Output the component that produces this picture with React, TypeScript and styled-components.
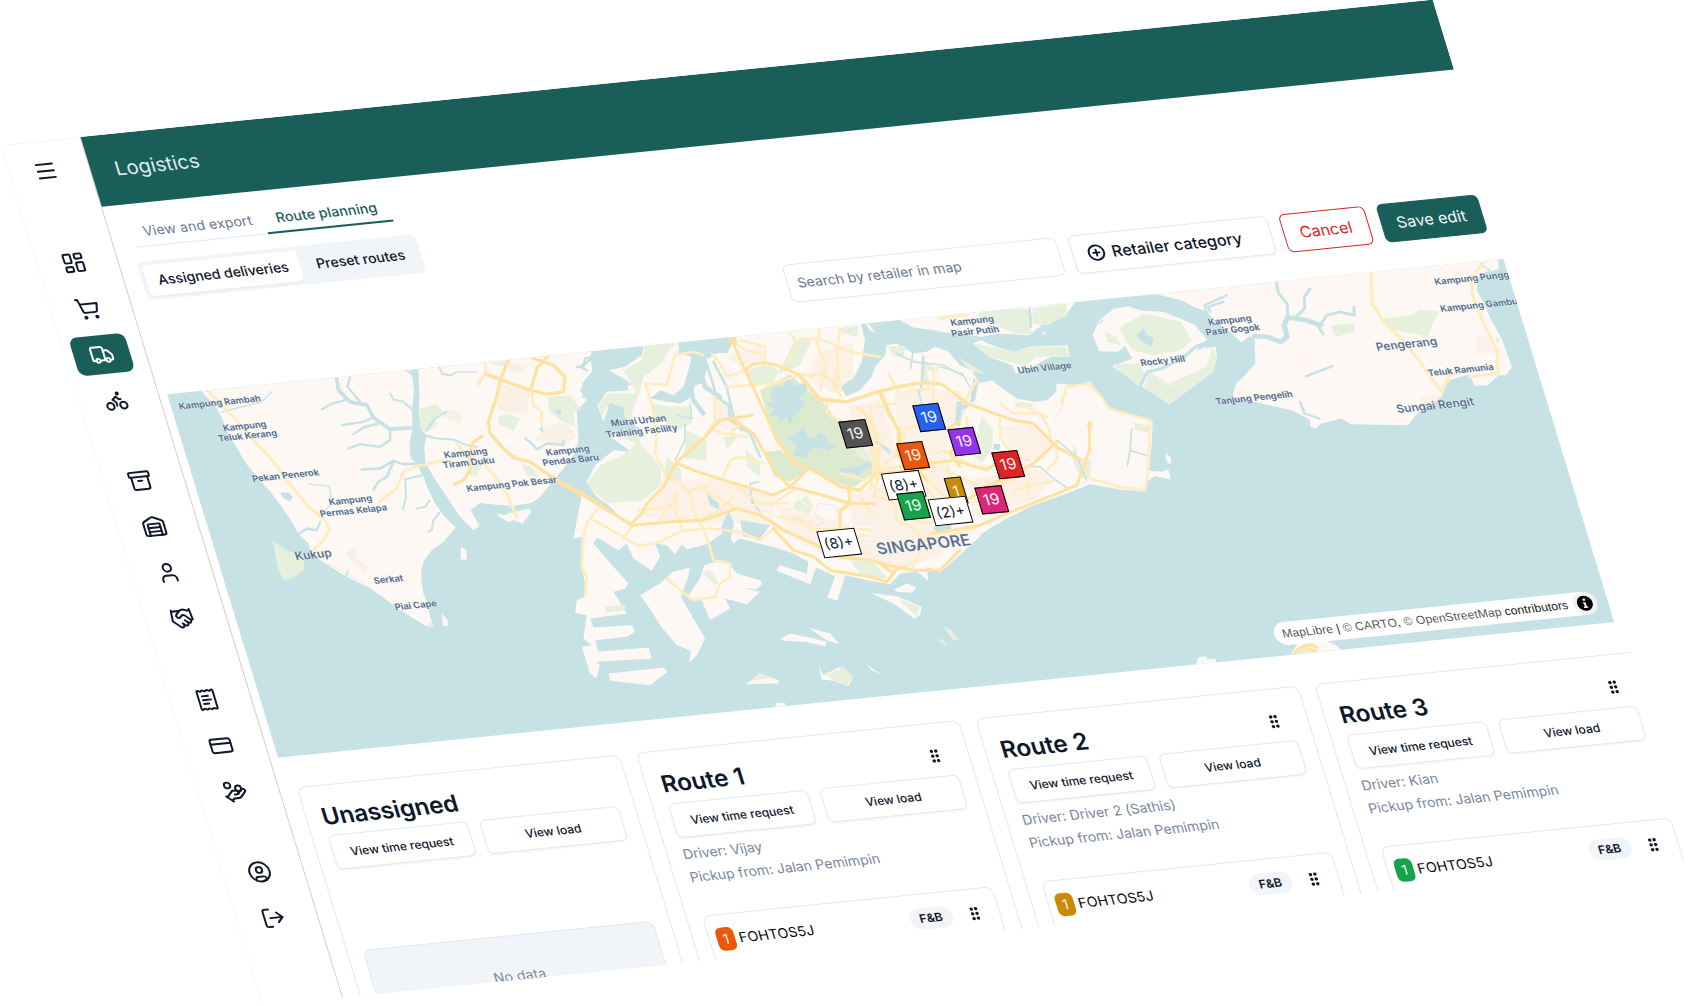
import React from "react";
import styled, { createGlobalStyle, css } from "styled-components";
import {
  Archive,
  Bike,
  CirclePlus,
  CircleUser,
  CreditCard,
  HandCoins,
  Handshake,
  LayoutDashboard,
  LogOut,
  Menu,
  ReceiptText,
  ShoppingCart,
  Truck,
  User,
  Warehouse,
} from "lucide-react";

const c = {
  brand: "#1a5e59",
  ink: "#0f172a",
  muted: "#6b7a90",
  line: "#e2e8f0",
  soft: "#f1f5f9",
  danger: "#dc2626",
  water: "#c7e2e5",
  land: "#fdf8f4",
  park: "#e7f0dc",
  wood: "#dcebd0",
  built: "#fbf1e6",
  road: "#ffe2a0",
  minor: "#ffecbf",
  label: "#587290",
};

const GlobalStyle = createGlobalStyle`
  *, *::before, *::after { box-sizing: border-box; }
  html, body { margin: 0; background: #fff; }
  body { font-family: Inter, "Liberation Sans", sans-serif; color: ${c.ink}; }
  button, input { font: inherit; margin: 0; }
`;

const Stage = styled.div`
  width: 1695px;
  height: 1006px;
  overflow: hidden;
  background: #fff;
`;

/* The whole application window, tilted onto an inclined plane. */
const Window = styled.div`
  display: flex;
  width: 1440px;
  height: 900px;
  overflow: hidden;
  background: #fff;
  transform-origin: 0 0;
  transform: matrix(0.9949, -0.101, 0.2915, 0.9562, 0, 145.1);
`;

const Sidebar = styled.nav`
  flex: none;
  display: flex;
  flex-direction: column;
  width: 81px;
  padding: 9.5px 0 0 7.5px;
  border: 1px solid #f6f6f6;
  border-right-color: #cfcfcf;
  border-bottom: 0;
`;

const NavGroup = styled.div`
  display: flex;
  flex-direction: column;
  gap: 8px;
  margin-bottom: 44.5px;
  &:first-child {
    margin-bottom: 56px;
  }
`;

const NavButton = styled.button<{ $active?: boolean }>`
  display: flex;
  align-items: center;
  justify-content: center;
  width: 56px;
  height: 40px;
  padding: 0;
  border: 0;
  border-radius: 8px;
  background: ${(p) => (p.$active ? c.brand : "transparent")};
  color: ${(p) => (p.$active ? "#fff" : c.ink)};
`;

const Main = styled.main`
  flex: 1;
  min-width: 0;
  display: flex;
  flex-direction: column;
`;

const Header = styled.header`
  flex: none;
  display: flex;
  align-items: center;
  height: 73px;
  padding: 0 24px 1px;
  background: ${c.brand};
  color: #dfecea;
  font-size: 20px;
`;

const PageTabs = styled.div`
  display: flex;
  align-self: flex-start;
  margin: 8.5px 0 0 21px;
`;

const PageTab = styled.span<{ $active?: boolean }>`
  height: 36px;
  padding: 10px 12px 0;
  font-size: 14px;
  line-height: 20px;
  letter-spacing: 0.12px;
  color: ${c.muted};
  border-bottom: 1px solid ${c.line};
  ${(p) =>
    p.$active &&
    css`
      color: ${c.brand};
      font-weight: 500;
      border-bottom: 2px solid ${c.brand};
    `}
`;

const Segment = styled.div`
  display: flex;
  align-self: flex-start;
  gap: 4px;
  height: 40px;
  margin: 15.5px 0 0 17px;
  padding: 4px;
  border-radius: 6px;
  background: ${c.soft};
`;

const SegmentItem = styled.span<{ $active?: boolean }>`
  padding: 6px 12px;
  border-radius: 5px;
  font-size: 14px;
  font-weight: 500;
  line-height: 20px;
  ${(p) =>
    p.$active &&
    css`
      background: #fff;
      box-shadow: 0 1px 2px rgba(0, 0, 0, 0.06);
    `}
`;

const Toolbar = styled.div`
  display: flex;
  justify-content: flex-end;
  gap: 12px;
  margin-top: 28.5px;
  padding-right: 15.5px;
`;

const SearchBox = styled.input`
  width: 275px;
  height: 40px;
  padding: 0 10px;
  border: 1px solid ${c.line};
  border-radius: 6px;
  background: #fff;
  font-size: 14px;
  &::placeholder {
    color: ${c.muted};
    opacity: 1;
  }
`;

const ToolButton = styled.button<{ $kind: "outline" | "danger" | "primary"; $width: number }>`
  display: flex;
  align-items: center;
  justify-content: center;
  gap: 8px;
  width: ${(p) => p.$width}px;
  height: 40px;
  padding: 0;
  border-radius: 6px;
  border: 1px solid ${c.line};
  background: #fff;
  font-size: 16px;
  ${(p) =>
    p.$kind === "outline" &&
    css`
      justify-content: flex-start;
      padding-left: 14px;
      gap: 7px;
      color: ${c.ink};
      font-weight: 500;
      box-shadow: 0 1px 2px rgba(0, 0, 0, 0.06);
    `}
  ${(p) =>
    p.$kind === "danger" &&
    css`
      color: ${c.danger};
      border-color: ${c.danger};
    `}
  ${(p) =>
    p.$kind === "primary" &&
    css`
      color: #f2f8f7;
      background: ${c.brand};
      border-color: ${c.brand};
    `}
`;

const MapPane = styled.section`
  position: relative;
  flex: none;
  width: 1343px;
  height: 380px;
  margin: 28px 0 0 8px;
  overflow: hidden;
  background: ${c.water};
`;

const MapCanvas = styled.svg`
  display: block;
  width: 1343px;
  height: 380px;
`;

const Place = styled.span<{ $x: number; $y: number; $size?: number; $start?: boolean }>`
  position: absolute;
  left: ${(p) => p.$x}px;
  top: ${(p) => p.$y}px;
  transform: translate(${(p) => (p.$start ? "0" : "-50%")}, -50%);
  white-space: pre;
  text-align: center;
  color: ${c.label};
  font-size: ${(p) => p.$size ?? 9.2}px;
  line-height: 10.6px;
  font-weight: ${(p) => (p.$size ? 600 : 700)};
  text-shadow: 0 0 1px #fff, 0 0 1px #fff;
`;

const Marker = styled.span<{ $x: number; $y: number; $w: number; $fill: string }>`
  position: absolute;
  left: ${(p) => p.$x - p.$w / 2}px;
  top: ${(p) => p.$y - 14}px;
  display: flex;
  align-items: center;
  justify-content: center;
  width: ${(p) => p.$w}px;
  height: 28px;
  border: 1px solid #000;
  background: ${(p) => p.$fill};
  color: ${(p) => (p.$fill === "#fff" ? c.ink : "#f3f4f6")};
  font-size: ${(p) => (p.$fill === "#fff" ? 14.5 : 15.5)}px;
`;

const Attribution = styled.div`
  position: absolute;
  right: 11px;
  bottom: 10px;
  display: flex;
  align-items: center;
  justify-content: space-between;
  width: 324px;
  height: 24px;
  padding-left: 8px;
  border-radius: 12px;
  background: #fff;
  color: #222;
  font: 12px/20px "Liberation Sans", Arial, sans-serif;
  letter-spacing: 0.08px;
  white-space: nowrap;
  a {
    color: rgba(0, 0, 0, 0.7);
  }
`;

const InfoButton = styled.span`
  display: flex;
  align-items: center;
  justify-content: center;
  width: 24px;
  height: 24px;
  border-radius: 12px;
  background: #f2f2f2;
`;

const Board = styled.section`
  flex: none;
  display: flex;
  gap: 16px;
  margin: 32.5px 0 0 17px;
`;

const Column = styled.article`
  flex: none;
  display: flex;
  flex-direction: column;
  width: 325px;
  height: 320px;
  padding: 16px 16px 0 15px;
  border: 1px solid ${c.line};
  border-radius: 8px;
`;

const ColumnHead = styled.div<{ $plain?: boolean }>`
  display: flex;
  align-items: flex-start;
  justify-content: space-between;
  height: ${(p) => (p.$plain ? 35 : 38)}px;
  padding: ${(p) => (p.$plain ? 0 : 2)}px 9px 0 0;
`;

const ColumnTitle = styled.h2`
  margin: 0;
  font-size: 24px;
  font-weight: 600;
  line-height: 32px;
  letter-spacing: -0.1px;
`;

const HeadGrip = styled.span`
  display: flex;
  padding-top: 6.5px;
`;

const ButtonRow = styled.div`
  display: grid;
  grid-template-columns: 1fr 1fr;
  gap: 12px;
`;

const SmallButton = styled.button`
  height: 36px;
  padding: 0 1px 0 0;
  border: 1px solid ${c.line};
  border-radius: 6px;
  background: #fff;
  color: ${c.ink};
  font-size: 12px;
  font-weight: 500;
  box-shadow: 0 1px 2px rgba(0, 0, 0, 0.06);
`;

const Details = styled.div<{ $plain?: boolean }>`
  height: ${(p) => (p.$plain ? 84 : 81)}px;
  padding-top: 4.5px;
  color: #7a889d;
  font-size: 14px;
  line-height: 24px;
  letter-spacing: -0.05px;
`;

const Stop = styled.div`
  display: flex;
  align-items: center;
  height: 90px;
  padding: 0 16.5px 38.5px 7px;
  border: 1px solid ${c.line};
  border-radius: 8px;
`;

const Order = styled.span<{ $fill: string }>`
  display: flex;
  align-items: center;
  justify-content: center;
  width: 18px;
  height: 24px;
  border-radius: 6px;
  background: ${(p) => p.$fill};
  color: #f6f6f6;
  font-size: 14px;
`;

const StopName = styled.span`
  flex: 1;
  padding-left: 4px;
  color: #0a0a0a;
  font-size: 14px;
  letter-spacing: 0.15px;
`;

const Tag = styled.span`
  padding: 3px 10px;
  margin-right: 14px;
  border-radius: 11px;
  background: ${c.soft};
  font-size: 12px;
  font-weight: 600;
  line-height: 16px;
`;

const Empty = styled.div`
  height: 90px;
  padding-top: 30.5px;
  border: 1px solid ${c.line};
  border-radius: 8px;
  background: ${c.soft};
  color: #7d8ba0;
  text-align: center;
  font-size: 14px;
  line-height: 20px;
  letter-spacing: 0.1px;
`;

const nav = [
  [{ icon: Menu }],
  [{ icon: LayoutDashboard }, { icon: ShoppingCart }, { icon: Truck, active: true }, { icon: Bike }],
  [{ icon: Archive }, { icon: Warehouse }, { icon: User }, { icon: Handshake }],
  [{ icon: ReceiptText }, { icon: CreditCard }, { icon: HandCoins }],
  [{ icon: CircleUser }, { icon: LogOut }],
] as { icon: typeof Menu; active?: boolean }[][];

const places: { t: string; x: number; y: number; s?: number; start?: boolean }[] = [
  { t: "Kampung Rambah", x: 48.8, y: 14.5 },
  { t: "Kampung\nTeluk Kerang", x: 66, y: 46 },
  { t: "Pekan Penerok", x: 91.2, y: 95.7 },
  { t: "Kampung\nPermas Kelapa", x: 147, y: 132.5 },
  { t: "Kukup", x: 94.7, y: 178.2, s: 11.8 },
  { t: "Serkat", x: 160.6, y: 211 },
  { t: "Piai Cape", x: 179.5, y: 240 },
  { t: "Kampung\nTiram Duku", x: 273.5, y: 96 },
  { t: "Kampung\nPendas Baru", x: 373.8, y: 104 },
  { t: "Kampung Pok Besar", x: 309, y: 127.3 },
  { t: "Murai Urban\nTraining Facility", x: 451.6, y: 81.5 },
  { t: "Kampung\nPasir Putih", x: 806.5, y: 14.8 },
  { t: "Ubin Village", x: 863.2, y: 64.8 },
  { t: "Rocky Hill", x: 980.5, y: 69 },
  { t: "Kampung\nPasir Gogok", x: 1058, y: 40 },
  { t: "Tanjung Pengelih", x: 1058.5, y: 116.8 },
  { t: "Kampung Punggai", x: 1269, y: 17.8, start: true },
  { t: "Kampung Gambut", x: 1266.6, y: 45.2, start: true },
  { t: "Pengerang", x: 1223, y: 77.9, s: 11.6 },
  { t: "Teluk Ramunia", x: 1268.4, y: 109.5 },
  { t: "Sungai Rengit", x: 1232.9, y: 142.6, s: 11.6 },
  { t: "SINGAPORE", x: 692.6, y: 230.6, s: 16.2 },
];

const markers: { t: string; x: number; y: number; w: number; fill: string }[] = [
  { t: "19", x: 659.3, y: 111, w: 26.5, fill: "#525252" },
  { t: "19", x: 735.9, y: 102, w: 26.5, fill: "#2563eb" },
  { t: "19", x: 762.9, y: 130, w: 26.5, fill: "#9333ea" },
  { t: "19", x: 709, y: 139.2, w: 26.5, fill: "#ea580c" },
  { t: "19", x: 799.1, y: 158.1, w: 26.5, fill: "#dc2626" },
  { t: "(8)+", x: 691.1, y: 168.1, w: 38, fill: "#fff" },
  { t: "19", x: 694.3, y: 190.4, w: 26.5, fill: "#16a34a" },
  { t: "1", x: 740.2, y: 179.8, w: 17, fill: "#ca8a04" },
  { t: "(2)+", x: 728.8, y: 199.6, w: 38, fill: "#fff" },
  { t: "19", x: 772.3, y: 192.3, w: 26.5, fill: "#db2777" },
  { t: "(8)+", x: 610.5, y: 220.2, w: 38, fill: "#fff" },
];

const routes = [
  { title: "Route 1", driver: "Vijay", fill: "#ea580c" },
  { title: "Route 2", driver: "Driver 2 (Sathis)", fill: "#ca8a04" },
  { title: "Route 3", driver: "Kian", fill: "#16a34a" },
];

function Grip() {
  return (
    <svg width="16" height="16" viewBox="0 0 16 16" fill={c.ink}>
      {[3, 8, 13].map((y) =>
        [5.8, 10.2].map((x) => <circle key={`${x}-${y}`} cx={x} cy={y} r="1.7" />)
      )}
    </svg>
  );
}

const SURVEY = "matrix(0.9749 0.103 -0.2972 1.0144 -45.79 -417)";
const WEST = "translate(160 330) scale(0.3333)";
const CITY = "translate(560 290) scale(0.3333)";
const EAST = "translate(800 370) scale(0.3333)";
const NORTHEAST = "translate(940 240) scale(0.37 0.3333)";

function Geography() {
  return (
    <MapCanvas viewBox="0 0 1343 380" aria-hidden="true">
      <g transform={SURVEY} strokeLinejoin="round" strokeLinecap="round">
        {/* Johor, west of the strait */}
        <g transform={WEST}>
          <g fill={c.land}>
            <path d="M118 170 L130 190 165 225 185 262 200 300 225 345 262 405 300 450 335 490 365 530 392 570 415 610 445 640 450 662 480 690 505 706 560 740 620 770 665 798 700 825 760 865 800 888 820 888 810 860 800 815 790 790 785 760 783 725 792 690 815 660 850 635 887 592 870 575 850 555 825 520 805 480 790 440 770 400 752 385 748 345 757 290 755 240 762 180 755 130 740 90 Z" />
            <path d="M775 90 L775 130 778 200 776 250 785 300 800 318 792 350 797 400 820 440 860 500 900 560 940 600 958 588 932 540 960 518 1010 525 1060 530 1110 522 1140 500 1165 470 1215 410 1240 375 1255 330 1250 240 1280 210 1260 180 1275 150 1300 140 1300 100 1290 50 Z" />
            <path d="M1010 548 L1035 555 1050 548 1110 535 1112 548 1088 580 1060 570 1045 575 1020 562Z" />
            <path d="M903 650 L918 660 921 688 901 688Z" />
            <path d="M845 850 L862 868 865 885 848 888Z" />
          </g>
          <g fill={c.park}>
            <path d="M338 632 L380 660 432 680 432 718 400 742 372 750 355 720Z" />
            <path d="M778 235 L830 222 850 245 825 262 830 285 795 310 780 290Z" />
            <path d="M1165 200 L1230 195 1262 235 1240 250 1245 290 1200 270 1165 240Z" />
            <path d="M1012 260 L1040 250 1080 265 1060 303 1018 283Z" />
            <path d="M990 100 L1040 90 1035 108Z M800 888 L812 875 820 888Z" />
            <path d="M1085 400 L1120 415 1140 445 1100 435Z M925 400 L975 385 950 440 930 435Z" />
          </g>
          <g fill="#f9f0e6">
            <path d="M1020 160 L1110 185 1100 250 1010 240Z M1160 290 L1215 275 1250 320 1215 345 1120 330Z" />
            <path d="M555 670 L580 652 595 665 582 680 625 712 615 732Z M1040 90 L1100 110 1090 130 1050 125Z M860 235 L905 250 900 280 845 260Z" />
          </g>
          <g fill="none" stroke={c.water}>
            <path strokeWidth="11" d="M530 145 L535 180 570 215 620 225 640 262 690 297 752 293" />
            <path strokeWidth="7" d="M570 140 L562 170 600 215 M560 208 L515 220 485 238 M640 262 L610 275 545 285 M655 280 L610 292 580 312 M690 300 L690 330 660 350 600 342 565 355" />
            <path strokeWidth="8" d="M770 400 L730 402 700 392 660 415 605 418 M700 395 L680 440 655 455 640 478" />
            <path strokeWidth="6" d="M785 435 L735 448 738 500 728 538 M808 512 L795 530 770 535 M838 548 L820 570 815 600 803 605 M690 190 L700 208 730 215 756 238 M740 120 L756 132 M838 112 L845 130 870 136 890 126 M795 315 L830 325 880 328 920 345 950 350 M800 300 L825 265 858 245" />
            <path strokeWidth="7" d="M415 612 L440 595 470 600 480 575 M958 525 L1060 530 1125 520 M1095 325 L1115 340 1130 358 1160 340 1210 345 1210 330" />
            <path strokeWidth="4" d="M185 245 L305 215 335 185 M445 462 L508 468 515 520 483 555 M890 126 L950 126 M556 742 L565 720" />
            <path strokeWidth="7" d="M1300 80 L1275 85 1270 110 1250 110 M1300 125 L1270 160 1285 190 1268 200" />
          </g>
          <path fill={c.water} d="M360 488 L385 487 398 500 390 514 368 503Z M1180 238 L1205 240 1200 258Z M1135 295 L1150 290 1148 308Z M1290 75 L1350 55 1350 90 1300 140Z" />
          <g fill="none" stroke={c.minor} strokeWidth="9">
            <path d="M140 180 L200 240 290 340 345 400 380 450 440 525 495 570 508 600 490 630 458 662" />
            <path d="M658 515 L710 475 730 425 770 408 850 392 880 398" />
            <path d="M1115 190 L1120 225 1145 245 1145 285 M975 130 L952 165 M975 95 L978 130 M975 405 L1010 445 1045 500 1070 560" />
            <path d="M890 340 L910 365 M1270 500 L1300 560 1275 600 1268 720 1280 740 1276 800 M1300 565 L1350 600" />
          </g>
          <g fill="none" stroke={c.road} strokeWidth="10">
            <path d="M1045 90 L1020 150 1010 200 985 275 990 310 1030 355 1060 382 1110 395 1160 430 1200 455 1262 490 1300 510 1350 545" />
            <path d="M978 132 L1040 155 1110 180 1160 192 1210 185 1215 140 1180 105 1120 85 M1165 75 L1130 115 1112 180" />
            <path d="M967 318 L940 335 930 365 930 420 910 450 883 462" />
          </g>
          <path fill={c.road} d="M1252 480 l20 4 4 14 -16 4 -12 -10Z M1050 375 l16 0 6 12 -16 2Z" />
          <path fill="none" stroke="#f2cfcf" strokeWidth="2" strokeDasharray="6 5" d="M505 702 L560 730 640 780" />
        </g>

        {/* Singapore, north and west coast */}
        <g transform={CITY}>
          <g fill={c.land}>
            <path d="M255 150 L245 195 195 230 145 240 200 270 205 300 140 305 112 345 130 395 150 335 190 350 185 420 150 440 215 485 160 480 105 525 80 575 110 620 150 650 190 690 100 640 65 615 50 690 40 745 65 740 65 830 75 880 75 920 50 930 45 968 80 975 70 1045 95 1065 65 1070 90 1150 108 1165 120 1125 108 1115 275 1105 265 1072 115 1085 105 1050 200 1040 225 1025 215 1005 100 1012 90 985 200 970 160 905 195 895 205 880 160 830 100 760 112 742 175 780 200 760 220 805 275 842 300 800 285 760 320 765 345 792 365 762 380 777 440 762 500 720 520 760 540 745 645 772 700 790 745 815 740 850 658 825 650 842 750 882 768 832 825 858 802 922 832 932 855 855 930 872 990 882 1020 850 1070 845 1105 872 1100 830 1140 847 1260 740 1300 500 1300 300 1262 285 1235 240 1200 225 1165 185 1125 170 1100 185 1060 190 1010 160 980 165 975 195 945 230 935 260 900 300 858 318 840 285 880 265 905 215 915 150 900 90 525 120 520 155 500 190 475 185 445 205 408 182 358 185 350 130Z" />
            <path d="M1010 85 L1060 112 1180 128 1260 130 1260 60Z" />
            <path d="M240 915 L300 880 340 845 388 832 385 860 362 920 400 985 435 1045 410 1095 387 1118 392 1082 350 1065 300 1005 262 945Z" />
            <path d="M320 865 L385 915 420 865 432 825 470 815 508 822 530 850 600 870 606 882 588 897 545 893 600 905 560 942 495 925 510 955 450 990 425 930 385 925Z" />
            <path d="M145 1150 L310 1132 322 1145 270 1185 150 1172Z" />
            <path d="M662 1045 L690 1030 750 1043 800 1055 795 1068 735 1055 670 1052Z M745 1012 L810 1030 838 1062 800 1050Z" />
            <path d="M557 1182 L600 1150 655 1170 655 1180Z M775 1125 L790 1155 840 1130 880 1160 865 1188 820 1172 785 1168Z M918 1122 L968 1155 935 1140Z" />
            <path d="M645 1250 L650 1238 678 1240 665 1260Z M915 100 L930 105 945 130 930 120Z" />
            <path d="M930 908 L1010 918 1085 950 1080 975 1062 985 1000 940Z M1002 898 L1040 880 1070 893 1055 908 1010 905Z" />
          </g>
          <g fill={c.park}>
            <path d="M255 165 L350 155 320 190 305 220 250 260 240 300 215 370 240 460 285 510 300 530 305 580 250 630 140 640 80 580 120 525 180 500 230 460 150 430 190 380 150 330 125 380 115 340 145 310 230 310 190 240 245 210Z" />
            <path d="M270 340 L330 350 390 350 395 400 350 420 290 380Z M380 420 L440 450 440 510 370 505Z M490 440 L530 440 500 480Z M555 475 L600 520 600 560 560 530Z" />
            <path d="M830 115 L895 105 890 140 850 130Z M985 170 L1035 165 1030 205 1000 195Z M1195 205 L1260 245 1240 245Z" />
            <path d="M705 150 L760 140 720 225 650 255 680 200Z M560 240 L620 220 655 240 640 280 575 285Z" />
            <path d="M135 950 L195 943 195 962 138 966Z M425 845 L450 840 475 875 465 885Z M1015 925 L1080 950 1070 980 1040 950Z M570 1170 L605 1150 640 1165Z M800 1155 L850 1130 880 1160 862 1185 820 1172Z" />
            <path d="M1130 1045 L1150 1050 1165 1072Z M1150 1010 L1175 1020 1195 1050 1180 1050Z M700 640 L740 615 760 650 740 690 700 680Z M870 810 L930 815 980 860 960 870 900 850Z" />
            <path d="M320 500 L365 540 360 590 310 560Z M1090 210 L1130 240 1120 300 1090 280Z M870 640 L900 660 895 700 880 680Z" />
            <path d="M895 345 L930 375 925 420 900 400Z M1005 425 L1040 430 1030 450Z M790 400 L860 400 940 470 940 520 870 480Z" />
          </g>
          <g fill={c.built}>
            <path d="M450 300 L520 350 560 420 500 420 460 400Z M300 580 L460 560 640 620 640 700 420 700 240 680Z M640 640 L860 700 980 800 1000 830 800 800 700 740Z" />
            <path d="M780 180 L880 160 880 260 820 310 740 260Z M860 350 L960 330 1000 450 1010 560 930 500Z M1000 310 L1200 280 1260 420 1260 640 1040 600 1020 440Z M500 200 L600 170 620 210 540 230Z" />
            <path d="M860 590 L1000 620 1010 700 880 710Z" />
          </g>
          <g fill={c.wood}>
            <path d="M600 300 L690 252 740 298 790 340 840 400 855 450 900 500 945 522 940 550 880 592 810 575 740 535 700 515 650 440 620 370Z" />
            <path d="M615 485 L660 480 740 540 690 575 640 555Z" />
          </g>
          <g fill={c.water}>
            <path d="M358 160 L505 135 500 185 440 195 440 240 425 280 405 285 395 320 360 340 320 335 270 325 300 300 340 315 370 290 385 240 395 200 355 190Z" />
            <path d="M645 292 L665 290 690 255 702 288 738 275 742 305 712 328 735 335 722 360 705 370 690 405 680 380 662 398 650 375 622 378 645 355 615 345 640 332 628 318Z" />
            <path d="M678 442 L700 435 730 408 742 440 765 445 775 425 798 435 808 460 828 468 800 482 772 472 748 480 742 505 722 498 700 500 712 470Z M835 535 L880 532 940 512 938 530 905 542 900 560 870 545 845 552Z" />
            <path d="M140 340 L190 350 195 385 215 400 250 420 210 440 150 420 160 370Z M140 265 L200 270 215 285 160 285Z" />
            <path d="M540 690 L630 705 600 745 550 740Z M440 610 L475 640 480 660 450 645Z M505 660 L522 700 510 750 480 720Z" />
            <path d="M1190 345 L1215 330 1210 440 1180 360Z M1130 695 L1170 710 1140 720Z" />
          </g>
          <g fill="none" stroke={c.water}>
            <path strokeWidth="8" d="M440 220 L470 320 505 345 510 390 570 430 600 500 M460 215 L500 290 520 380 545 420 M1090 200 L1085 280 1072 345 1070 420" />
            <path strokeWidth="5" d="M570 600 L580 640 600 665 M950 455 L990 480 M595 575 L570 580 575 640 M1010 190 L1060 215 1150 225 1230 270 M1060 175 L1052 235 M390 340 L395 385 350 375 M375 400 L375 450 345 510" />
            <path strokeWidth="8" d="M1215 310 L1200 350 1215 400 M110 195 L60 230 80 240 M100 250 L65 300 80 320" />
            <path strokeWidth="14" d="M420 240 L435 290 480 320 M390 280 L400 330 430 370" />
          </g>
          <g fill="none" stroke={c.minor} strokeWidth="8">
            <path d="M555 240 L500 260 480 220 455 190 M500 290 L640 280 720 255 790 255 M605 190 L560 180 525 160 M615 215 L615 170 540 150 M680 220 L715 165 690 130" />
            <path d="M780 300 L800 230 770 160 780 120 M840 120 L830 180 835 240 820 290 845 320 M720 145 L790 150 870 185 960 200" />
            <path d="M260 280 L320 285 345 195 400 185 430 195 M255 280 L275 340 290 420 285 490 315 550 M465 320 L465 390 430 450 M540 400 L510 430 560 440 M460 420 L530 440" />
            <path d="M315 550 L360 580 390 610 400 660 440 740 460 810 510 820 510 860 480 880 465 920 400 930 360 900 320 865 M390 600 L440 590 M350 610 L345 660 365 715 M430 600 L520 650" />
            <path d="M100 690 L190 740 235 768 300 755 365 722 450 715 540 725 600 750 640 715 M120 645 L80 700 70 740 65 830 80 860 75 920 M105 640 L220 705 190 745" />
            <path d="M490 560 L510 510 540 500 610 520 M520 580 L600 640 690 640 M840 720 L840 670 870 630 870 590 M700 600 L640 640 M720 690 L760 720 840 715 960 720" />
            <path d="M890 350 L940 400 950 440 940 500 960 540 940 620 M930 350 L950 500 930 600 M1015 420 L1080 410 1180 430 M1015 450 L1005 500 940 545 M985 250 L1020 310 1130 290 1130 220 M950 350 L1060 330" />
            <path d="M960 540 L1060 520 1180 530 M950 640 L1000 670 1010 720 980 740 900 735 860 800 M1000 670 L1060 700 1100 740 1080 800 1040 830 M1010 720 L1060 790 M940 710 L990 820 M960 690 L1060 760 1160 740 1260 710" />
            <path d="M1060 600 L1120 640 1180 640 M1060 380 L1040 420 1020 460 M900 620 L960 700 M880 790 L990 780 1080 760 M860 640 L1000 640 M1130 310 L1240 330 1260 300 M1110 460 L1110 540 1150 620" />
            <path d="M800 330 L800 370 860 400 920 470 M650 680 L720 690 M640 710 L720 740 M300 690 L330 640 M235 660 L330 650 345 620 M420 690 L480 660 520 620" />
          </g>
          <g fill="none" stroke={c.road} strokeWidth="9">
            <path d="M515 150 L560 250 620 380 650 450 700 515 760 540 840 590 900 600 950 550 1060 540 1180 530 1260 530" />
            <path d="M555 240 Q590 205 650 225 L720 255 780 325 860 335 950 305 Q1100 265 1150 280 L1260 340" />
            <path d="M575 375 L480 390 430 445 350 515 310 590 260 640 245 670 215 700" />
            <path d="M350 520 L400 540 490 570 560 590 640 615 690 590 740 540 M520 390 L580 430 620 500 650 550 690 590" />
            <path d="M0 580 L60 610 120 645 215 705 330 695 430 690 530 655 600 675 680 725 760 760 830 800 930 810 1020 835" />
            <path d="M690 590 L770 610 870 640 950 640 1010 680 M840 715 L840 660 870 640 865 590" />
            <path d="M640 715 L700 780 760 800 810 840 930 860 980 875 1000 850 960 820 1060 840 1140 840 1200 780" />
            <path d="M960 310 L985 370 1015 420 1015 500 1070 580 1150 640" />
            <path d="M985 870 L1060 770 1120 700 M1020 835 L1080 800 1110 740" />
          </g>
          <path fill={c.road} d="M502 145 l25 -5 5 18 -18 6Z M48 602 l16 -4 8 14 -14 8Z" />
          <path fill="none" stroke="#eed3d3" strokeWidth="2" strokeDasharray="7 5" d="M750 320 L820 420 790 540 M700 680 L770 705 790 700 765 670 775 640 820 645 840 680" />
          <path fill="none" stroke="#fff6e3" strokeWidth="4" d="M480 470 L440 490 M620 560 L640 600 M560 640 L620 650 M720 630 L800 690 M880 430 L920 480 M1050 290 L1050 330 M1160 440 L1180 520 M1120 560 L1140 600" />
        </g>

        {/* Singapore, east coast */}
        <g transform={EAST}>
          <path fill={c.land} d="M380 0 L470 10 535 40 575 30 612 58 650 85 700 95 742 90 768 65 770 40 830 45 870 35 900 75 920 108 1058 155 1055 220 1045 302 1085 305 1105 298 1112 328 1065 318 1040 335 1035 365 960 358 870 342 800 370 700 405 620 445 560 480 540 495 480 400 420 200Z" />
          <path fill={c.land} d="M1098 248 L1112 262 1112 282 1104 276Z" />
          <g fill={c.park}>
            <path d="M545 135 L580 180 575 235 545 280 515 250 530 200Z M1005 158 L1055 168 1052 190 1002 178Z M655 95 L700 100 690 118 640 108Z" />
            <path d="M820 215 L835 260 875 270 870 325 845 325 820 280Z M185 580 L215 570 260 625 225 610Z M480 95 L500 110 490 140 475 130Z" />
          </g>
          <g fill={c.built}>
            <path d="M280 70 L480 60 500 110 440 200 440 280 380 290 320 200Z M600 170 L690 160 760 210 730 270 640 260Z M500 330 L700 290 760 330 700 390 520 440Z" />
            <path d="M240 340 L440 280 480 400 420 560 300 590 200 540Z" />
          </g>
          <g fill={c.water}>
            <path d="M470 95 L500 90 505 110 485 120 480 170 465 160Z M580 220 L600 222 598 240 580 238Z M400 470 L450 460 455 480 410 490Z" />
            <path d="M520 20 L535 40 525 90 510 100 515 60Z" />
          </g>
          <g fill="none" stroke={c.water} strokeWidth="5">
            <path d="M995 175 L990 240 982 288 M990 240 L1040 256 M680 288 L720 290 760 325 800 352 M770 210 L830 260 860 330 M230 215 L270 250 M355 60 L365 100" />
          </g>
          <g fill="none" stroke={c.minor} strokeWidth="8">
            <path d="M785 100 L800 50 865 40 905 80 925 115 1050 150 1045 300 1035 360 960 350 870 325 M600 100 L640 130 720 130 750 180 750 210" />
            <path d="M600 140 L600 200 640 260 690 270 M660 100 L740 140 M770 225 L770 270 740 300 M500 140 L500 180 M490 100 L530 30 M400 0 L400 40 400 150" />
            <path d="M430 240 L520 290 560 290 M440 300 L540 350 640 330 M680 330 L690 390 M600 320 L620 400 M560 330 L580 360 M640 360 L760 330" />
            <path d="M120 310 L200 330 250 370 M200 320 L300 330 380 320 450 400 M230 380 L300 400 M280 370 L290 450 350 480 380 540 M310 440 L380 460 460 440 M340 590 L370 520 400 480" />
            <path d="M245 60 L280 160 300 180 380 160 M180 110 L240 200 230 340 M200 130 L220 300 M60 0 L120 60 110 0 M370 340 L400 380" />
          </g>
          <g fill="none" stroke={c.road} strokeWidth="9">
            <path d="M0 20 L60 90 140 95 235 65 Q380 25 430 45 L500 100 640 150 700 160 770 230 840 270" />
            <path d="M868 165 L868 240 830 345 760 375 620 430 540 465 400 490" />
            <path d="M240 70 L270 130 300 190 300 240 380 330 M300 290 L460 270 560 300 600 270 M770 215 L700 280 560 350 500 390" />
            <path d="M490 190 L450 250 480 290 M480 150 L440 180" />
          </g>
          <circle cx="870" cy="163" r="9" fill={c.road} />
          <path fill="none" stroke="#eed3d3" strokeWidth="2" strokeDasharray="7 5" d="M400 250 L450 240 M760 160 L790 100" />
        </g>

        {/* Johor Strait islands and Pengerang */}
        <g transform={NORTHEAST}>
          <g fill={c.land}>
            <path d="M0 200 L0 275 110 290 160 280 240 285 280 250 335 230 370 180 370 150Z" />
            <path d="M570 150 L585 162 650 180 690 202 722 215 745 245 780 270 815 308 835 288 850 295 852 370 820 410 800 430 790 470 870 490 950 510 985 530 1000 540 1000 558 1015 565 1030 550 1085 535 1110 552 1265 555 1290 520 1325 495 1355 470 1375 420 1430 402 1445 437 1480 435 1510 405 1530 405 1545 380 1520 300 1490 240 1470 190 1450 150 1455 110 1475 95 1510 90 1506 30Z" />
            <path d="M430 240 L470 205 510 198 540 210 600 215 650 235 690 255 722 300 690 330 745 320 748 350 738 395 620 492 465 378 520 355 500 318 480 335 430 333 412 285Z" />
            <path d="M88 310 L110 300 150 320 200 335 240 320 345 315 350 350 300 350 230 390 205 400 195 375 130 350Z" />
            <path d="M275 278 l8 -4 3 6 -8 3Z M608 645 l8 5 6 20 -8 -2Z M623 570 l5 2 -2 3Z" />
          </g>
          <g fill={c.park}>
            <path d="M110 210 L235 205 250 230 245 270 255 280 200 280 140 250 100 240Z M250 205 L340 190 345 225 290 255 250 250Z" />
            <path d="M90 310 L200 335 240 322 340 318 348 350 260 350 230 378 130 350Z M50 352 L90 378 122 402 80 390Z" />
            <path d="M485 262 L550 220 650 245 680 300 650 330 580 345 520 330 500 300Z M447 275 L475 290 488 315 450 305Z" />
            <path d="M465 372 L540 370 556 410 540 442 500 405Z M565 395 L620 430 720 380 735 320 748 350 738 395 620 490 550 445Z" />
            <path d="M1195 235 L1275 225 1295 208 1350 215 1335 240 1320 290 1230 270Z M1055 255 L1120 250 1120 275 1070 290Z M1500 290 L1515 300 1505 310Z" />
          </g>
          <path fill={c.land} d="M575 385 L620 375 660 350 720 320 715 370 640 400 625 430 600 415Z" />
          <path fill="#faf1e8" d="M1450 290 L1495 290 1500 340 1450 330Z M1300 470 L1355 465 1340 485 1290 510Z M990 360 l15 -6 0 12Z" />
          <g fill="none" stroke={c.water}>
            <path strokeWidth="9" d="M538 445 L560 395 600 385 660 350 690 320 722 305" />
            <path strokeWidth="14" d="M850 288 L885 290 920 305 938 290 930 255 940 232 990 240 1030 255" />
            <path strokeWidth="8" d="M940 232 L938 190 915 160 908 125 M960 232 L985 205 985 170 1000 145 M1030 250 L1045 225 1080 215 1120 225 1118 200 M1020 255 L1035 282" />
            <path strokeWidth="7" d="M720 215 L715 195 745 180 775 165 M730 215 L725 200 765 185 M242 205 L245 260 M990 408 L1060 378 M973 485 L985 520 1025 535" />
            <path strokeWidth="4" d="M1460 70 L1490 95 1510 90 M0 380 L60 400 80 440 M430 250 L440 240" />
          </g>
          <path fill={c.water} d="M530 285 L550 265 560 285 578 292 570 318 545 305Z" />
          <g fill="none" stroke={c.minor} strokeWidth="9">
            <path d="M1165 95 L1168 190 1200 245 1260 310 1300 370 1355 455 M1355 455 L1375 410 1390 400 M1470 70 L1435 110 1440 170 1470 250 1505 330 1508 400 1430 410 M0 235 L75 222" />
          </g>
          <g fill="none" stroke="#fff" strokeWidth="2" opacity="0.6">
            <path d="M150 215 L180 250 210 260 M260 215 L300 235 M560 240 L620 300 M590 420 L640 440 700 390" />
          </g>
        </g>

        {/* Batam, at the southern edge */}
        <g transform="translate(1150 560) scale(0.3476 0.3333)">
          <path fill={c.land} d="M130 320 L138 292 160 288 165 297 188 295 192 315Z M400 290 L430 240 500 240 530 252 555 270 420 290Z" />
          <path fill={c.park} d="M400 285 L440 252 470 275 420 285Z" />
          <path fill="none" stroke={c.road} strokeWidth="9" d="M415 278 Q450 240 480 262 M445 262 L480 275" />
        </g>
      </g>
    </MapCanvas>
  );
}

export default function App() {
  return (
    <>
      <GlobalStyle />
      <Stage>
        <Window>
          <Sidebar>
            {nav.map((group, i) => (
              <NavGroup key={i}>
                {group.map(({ icon: Icon, active }, j) => (
                  <NavButton key={j} $active={active}>
                    <Icon size={24} strokeWidth={2} />
                  </NavButton>
                ))}
              </NavGroup>
            ))}
          </Sidebar>
          <Main>
            <Header>Logistics</Header>
            <PageTabs>
              <PageTab>View and export</PageTab>
              <PageTab $active>Route planning</PageTab>
            </PageTabs>
            <Segment>
              <SegmentItem $active>Assigned deliveries</SegmentItem>
              <SegmentItem>Preset routes</SegmentItem>
            </Segment>
            <Toolbar>
              <SearchBox placeholder="Search by retailer in map" />
              <ToolButton $kind="outline" $width={200}>
                <CirclePlus size={18} strokeWidth={2.6} />
                Retailer category
              </ToolButton>
              <ToolButton $kind="danger" $width={86}>
                Cancel
              </ToolButton>
              <ToolButton $kind="primary" $width={102}>
                Save edit
              </ToolButton>
            </Toolbar>
            <MapPane>
              <Geography />
              {places.map((p) => (
                <Place key={p.t} $x={p.x} $y={p.y} $size={p.s} $start={p.start}>
                  {p.t}
                </Place>
              ))}
              {markers.map((m, i) => (
                <Marker key={i} $x={m.x} $y={m.y} $w={m.w} $fill={m.fill}>
                  {m.t}
                </Marker>
              ))}
              <Attribution>
                <span>
                  <a>MapLibre</a> | <a>© CARTO</a>, <a>© OpenStreetMap</a> contributors
                </span>
                <InfoButton>
                  <svg width="16" height="16" viewBox="0 0 16 16">
                    <circle cx="8" cy="8" r="7.8" />
                    <circle cx="8" cy="4.2" r="1.3" fill="#fff" />
                    <path d="M6 7h3v4.5h1.2v1.3H5.8v-1.3H7V8.2H6Z" fill="#fff" />
                  </svg>
                </InfoButton>
              </Attribution>
            </MapPane>
            <Board>
              <Column>
                <ColumnHead $plain>
                  <ColumnTitle>Unassigned</ColumnTitle>
                </ColumnHead>
                <ButtonRow>
                  <SmallButton>View time request</SmallButton>
                  <SmallButton>View load</SmallButton>
                </ButtonRow>
                <Details $plain />
                <Empty>No data</Empty>
              </Column>
              {routes.map((r) => (
                <Column key={r.title}>
                  <ColumnHead>
                    <ColumnTitle>{r.title}</ColumnTitle>
                    <HeadGrip>
                      <Grip />
                    </HeadGrip>
                  </ColumnHead>
                  <ButtonRow>
                    <SmallButton>View time request</SmallButton>
                    <SmallButton>View load</SmallButton>
                  </ButtonRow>
                  <Details>
                    <div>Driver: {r.driver}</div>
                    <div>Pickup from: Jalan Pemimpin</div>
                  </Details>
                  <Stop>
                    <Order $fill={r.fill}>1</Order>
                    <StopName>FOHTOS5J</StopName>
                    <Tag>F&amp;B</Tag>
                    <Grip />
                  </Stop>
                </Column>
              ))}
            </Board>
          </Main>
        </Window>
      </Stage>
    </>
  );
}
